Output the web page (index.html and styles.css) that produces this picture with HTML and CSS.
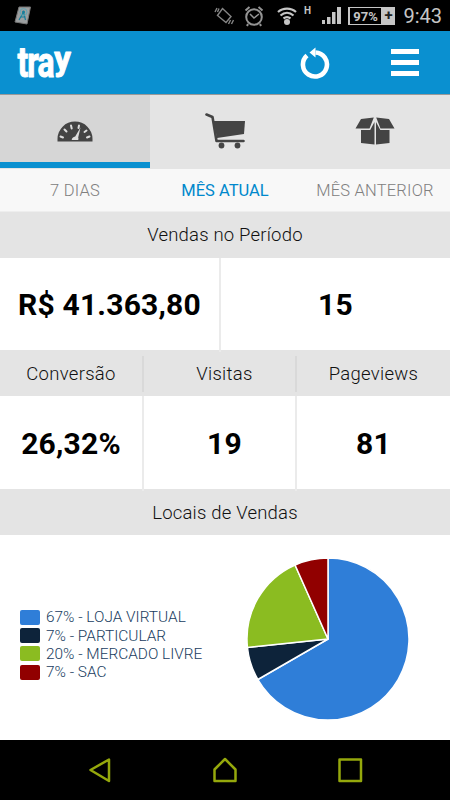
FILE: index.html
```html
<!DOCTYPE html>
<html lang="pt-BR">
<head>
    <meta charset="UTF-8">
    <meta name="viewport" content="width=device-width, initial-scale=1.0">
    <title>Tray</title>
    <link rel="stylesheet" href="styles.css">
</head>
<body>
<div class="status-bar">
    <svg class="status-app" width="18" height="20" viewBox="0 0 18 20">
        <path d="M5 1h11.500l-3.500 17-12-2z" fill="#9c9fa0" stroke="#777" stroke-linejoin="round"/>
        <path d="M5 14l4.500-8 2 8M6.500 11h5" fill="none" stroke="#167f9c" stroke-width="1.200"/>
        <circle cx="9.500" cy="6" r="3.500" fill="none" stroke="#5fa5b5"/>
        <circle cx="9.500" cy="6" r="1.500" fill="#167f9c"/>
    </svg>
    <svg width="20" height="20" viewBox="0 0 20 20" fill="none" stroke="#858585" stroke-width="1.400">
        <path d="M8.500 2.500l8.500 8-5 6-8.500-7z"/>
        <path d="M1 6l2-4M3.500 6l1.500-3.500M14.500 18l2-4M17.500 18l2-4"/>
    </svg>
    <svg class="status-alarm" width="20" height="22" viewBox="0 0 20 22" fill="none" stroke="#949494" stroke-width="2">
        <circle cx="10" cy="12" r="7.800"/>
        <path d="M1.500 5.500l4-3.500M18.500 5.500l-4-3.500M4 19l-1 2M16 19l1 2"/>
        <path d="M6 9l4 4 5-4" stroke-width="1.500"/>
    </svg>
    <svg class="status-wifi" width="20" height="18" viewBox="0 0 20 18" fill="none" stroke="#c6c6c6" stroke-width="2.200">
        <path d="M1 5c5-4.500 13-4.500 18 0M3.500 8.500c4-3.500 9-3.500 13 0M6.500 11.500c2-1.500 5-1.500 7 0"/>
        <circle cx="10" cy="15" r="3" fill="#c6c6c6" stroke="none"/>
    </svg>
    <span class="status-h">H</span>
    <svg class="status-signal" width="19" height="17" viewBox="0 0 19 17" fill="#c6c6c6">
        <path d="M0 13h3v4H0zM5 10h3.500v7H5zM10 5h3.500v12H10zM15 0h4v17h-4z"/>
    </svg>
    <div class="battery">
        <span class="battery-level">97%</span>
        <span class="battery-plus">+</span>
    </div>
    <span class="clock">9:43</span>
</div>

<header class="header">
    <svg class="logo" width="56" height="34" viewBox="0 0 56 34">
        <g class="logo-text">
            <text transform="translate(.500 30.500) scale(.74 1)" font-size="43" textLength="50" lengthAdjust="spacing">tra</text>
            <text transform="translate(37.200 24) scale(1 1)" font-size="33">y</text>
        </g>
    </svg>
    <svg class="refresh" width="30" height="34" viewBox="0 0 30 34">
        <path d="M7 9.500A12 12 0 1 0 15.500 6.500" fill="none" stroke="#fff" stroke-width="4.600"/>
        <path d="M9.500 6.500l6-5v10z" fill="#fff"/>
    </svg>
    <div class="menu"><span></span><span></span><span></span></div>
</header>

<nav class="tabs">
    <div class="tab active">
        <svg width="36" height="21" viewBox="0 0 36 21">
            <path d="M.500 20.500V18a17.500 17.500 0 0 1 35 0v2.500z" fill="#444"/>
            <path d="M3.500 15.500l2.500 1M7.500 8.500l2 2M14 4.500l.700 3M22 4.500l-.500 2.500M32.500 15.500l-2.500 1M29.500 9.500l-2 1.500" stroke="#ddd" stroke-width="2" stroke-linecap="round"/>
            <path d="M23.500 6.500l-2.300 10a3 3 0 0 1 0 2.500h-6.500c0-2 1.500-3 3.500-3.500z" fill="#ddd"/>
        </svg>
    </div>
    <div class="tab">
        <svg width="40" height="36" viewBox="0 0 40 36">
            <path d="M1.500 1.500l6 2.500 4 24h27" fill="none" stroke="#444" stroke-width="2.600" stroke-linecap="round" stroke-linejoin="round"/>
            <path d="M8.500 8l31.500 0-1 13-27 4z" fill="#444"/>
            <circle cx="16.500" cy="32.500" r="2.900" fill="#444"/>
            <circle cx="32.500" cy="32.500" r="2.900" fill="#444"/>
        </svg>
    </div>
    <div class="tab">
        <svg width="40" height="28" viewBox="0 0 40 28" fill="#444">
            <path d="M6 2l12.800-1.500-4.300 11H.500zM34 2L21.200.500l4.300 11h14z"/>
            <path d="M6 13h9.200l4.300-8v22.500L6 26zM34.500 13h-9.200l-4.300-8v22.500L34.500 26z"/>
        </svg>
    </div>
</nav>

<div class="periods">
    <span>7 DIAS</span>
    <span class="selected">MÊS ATUAL</span>
    <span>MÊS ANTERIOR</span>
</div>

<h2 class="title">Vendas no Período</h2>
<div class="row sales">
    <strong>R$ 41.363,80</strong>
    <strong>15</strong>
</div>

<div class="row labels">
    <span>Conversão</span>
    <span class="middle">Visitas</span>
    <span>Pageviews</span>
</div>
<div class="row stats">
    <strong>26,32%</strong>
    <strong class="middle">19</strong>
    <strong>81</strong>
</div>

<h2 class="title places">Locais de Vendas</h2>
<div class="chart">
    <ul class="legend">
        <li><i class="blue"></i>67% - LOJA VIRTUAL</li>
        <li><i class="navy"></i>7% - PARTICULAR</li>
        <li><i class="green"></i>20% - MERCADO LIVRE</li>
        <li><i class="red"></i>7% - SAC</li>
    </ul>
    <svg class="pie" width="164" height="164" viewBox="-82 -82 164 164" stroke="#fff" stroke-width="1.500" stroke-linejoin="round">
        <path d="M0 0V-81A81 81 0 1 1-70.150 40.500z" fill="#2f7ed8"/>
        <path d="M0 0L-70.150 40.500A81 81 0 0 1-80.560 8.470z" fill="#0d233a"/>
        <path d="M0 0L-80.560 8.470A81 81 0 0 1-32.950-74z" fill="#8bbc21"/>
        <path d="M0 0L-32.950-74A81 81 0 0 1 0-81z" fill="#910000"/>
    </svg>
</div>

<div class="nav-bar">
    <svg width="26" height="26" viewBox="0 0 26 26"><path d="M22 2.500v21.500L3.500 13z"/></svg>
    <svg width="26" height="26" viewBox="0 0 26 26"><path d="M13 2L2.500 12.500V24h21V12.500z"/></svg>
    <svg width="26" height="26" viewBox="0 0 26 26"><path d="M2.500 2.500h21.500V24H2.500z"/></svg>
</div>
</body>
</html>
```
FILE: styles.css
```css
* {
    box-sizing: border-box;
}
body {
    font-family: Roboto, "Liberation Sans", sans-serif;
    background: #fff;
    margin: 0;
    width: 450px;
    height: 800px;
    overflow: hidden;
}
svg {
    display: block;
    flex: none;
}
.status-bar {
    height: 31px;
    background: #000;
    display: flex;
    align-items: center;
    padding: 0 8px 0 14px;
    color: #c6c6c6;
}
.status-app {
    margin-right: 182px;
}
.status-alarm {
    margin-left: 10px;
}
.status-wifi {
    margin-left: 13px;
}
.status-h {
    font-size: 10px;
    font-weight: bold;
    margin: -10px 0 0 7px;
}
.status-signal {
    margin-left: 11px;
}
.battery {
    display: flex;
    align-items: center;
    margin-left: 7px;
    height: 18px;
}
.battery-level {
    width: 34px;
    height: 18px;
    border: 1px solid #c6c6c6;
    border-left-width: 2px;
    font-size: 13px;
    font-weight: bold;
    line-height: 17px;
    text-align: center;
}
.battery-plus {
    width: 13px;
    height: 18px;
    background: #c6c6c6;
    color: #222;
    font-size: 15px;
    font-weight: bold;
    line-height: 17px;
    text-align: center;
}
.clock {
    font-size: 20px;
    margin-left: auto;
}
.header {
    height: 64px;
    background: #0a90d0;
    border-bottom: 1px solid #999;
    display: flex;
    align-items: center;
    padding: 0 31px 0 17px;
}
.logo {
    overflow: visible;
}
.logo-text {
    font-weight: 700;
    fill: #fff;
    stroke: #fff;
    stroke-width: 1px;
    stroke-linejoin: round;
}
.refresh {
    margin: 0 61px 0 auto;
}
.menu {
    width: 28px;
    display: flex;
    flex-direction: column;
    gap: 6px;
}
.menu span {
    height: 5px;
    background: #fff;
}
.tabs {
    display: flex;
    height: 74px;
    background: #e4e4e4;
}
.tab {
    flex: 1;
    display: flex;
    align-items: center;
    justify-content: center;
    padding-bottom: 2px;
}
.tab.active {
    background: #d6d6d6;
    border-bottom: 6px solid #0a90d0;
    padding: 5px 0 0;
    margin-bottom: 1px;
}
.periods {
    display: flex;
    height: 43px;
    background: #f8f8f8;
    border-bottom: 1px solid #eee;
    color: #808080;
    font-size: 16.5px;
    font-weight: 300;
    line-height: 43px;
    text-align: center;
    letter-spacing: .2px;
}
.periods span {
    flex: 1;
}
.periods .selected {
    color: #0088cc;
    font-weight: 400;
    letter-spacing: 0;
}
.title {
    margin: 0;
    height: 46px;
    background: #e4e4e4;
    color: #111;
    font-size: 18.5px;
    font-weight: 300;
    line-height: 47px;
    text-align: center;
    letter-spacing: .2px;
}
.places {
    line-height: 48px;
}
.row {
    display: grid;
    grid-template-columns: 142px 153px 155px;
    text-align: center;
}
.row > * + * {
    border-left: 2px solid #ebebeb;
}
.row > .middle {
    padding-left: 10px;
}
.sales {
    grid-template-columns: 219px 231px;
}
.sales,
.stats {
    height: 93px;
    line-height: 95px;
    font-size: 30px;
    letter-spacing: .2px;
    color: #000;
}
.sales {
    height: 92px;
    line-height: 94px;
}
.labels {
    height: 46px;
    padding: 6px 0;
    background: #e4e4e4;
    color: #111;
    font-size: 18.5px;
    font-weight: 300;
    line-height: 36px;
    letter-spacing: .3px;
}
.labels > * + * {
    border-color: #d9d9d9;
}
.chart {
    display: flex;
    height: 205px;
    padding: 22px 40px 0 20px;
    justify-content: space-between;
}
.legend {
    list-style: none;
    margin: 52px 0 0;
    padding: 0;
    color: #183c60;
    font-size: 15.4px;
    font-weight: 300;
    line-height: 19.4px;
    white-space: nowrap;
}
.legend li {
    display: flex;
    align-items: center;
    height: 18.2px;
}
.legend i {
    width: 20px;
    height: 15px;
    border-radius: 2px;
    margin: 0 6px 1px 0;
}
.blue {
    background: #2f7ed8;
}
.navy {
    background: #0d233a;
}
.green {
    background: #8bbc21;
}
.red {
    background: #910000;
}
.nav-bar {
    height: 60px;
    background: #000;
    display: flex;
    justify-content: center;
    align-items: center;
    gap: 99px;
}
.nav-bar path {
    fill: none;
    stroke: #95a80c;
    stroke-width: 2.5;
    stroke-linejoin: round;
}
```
